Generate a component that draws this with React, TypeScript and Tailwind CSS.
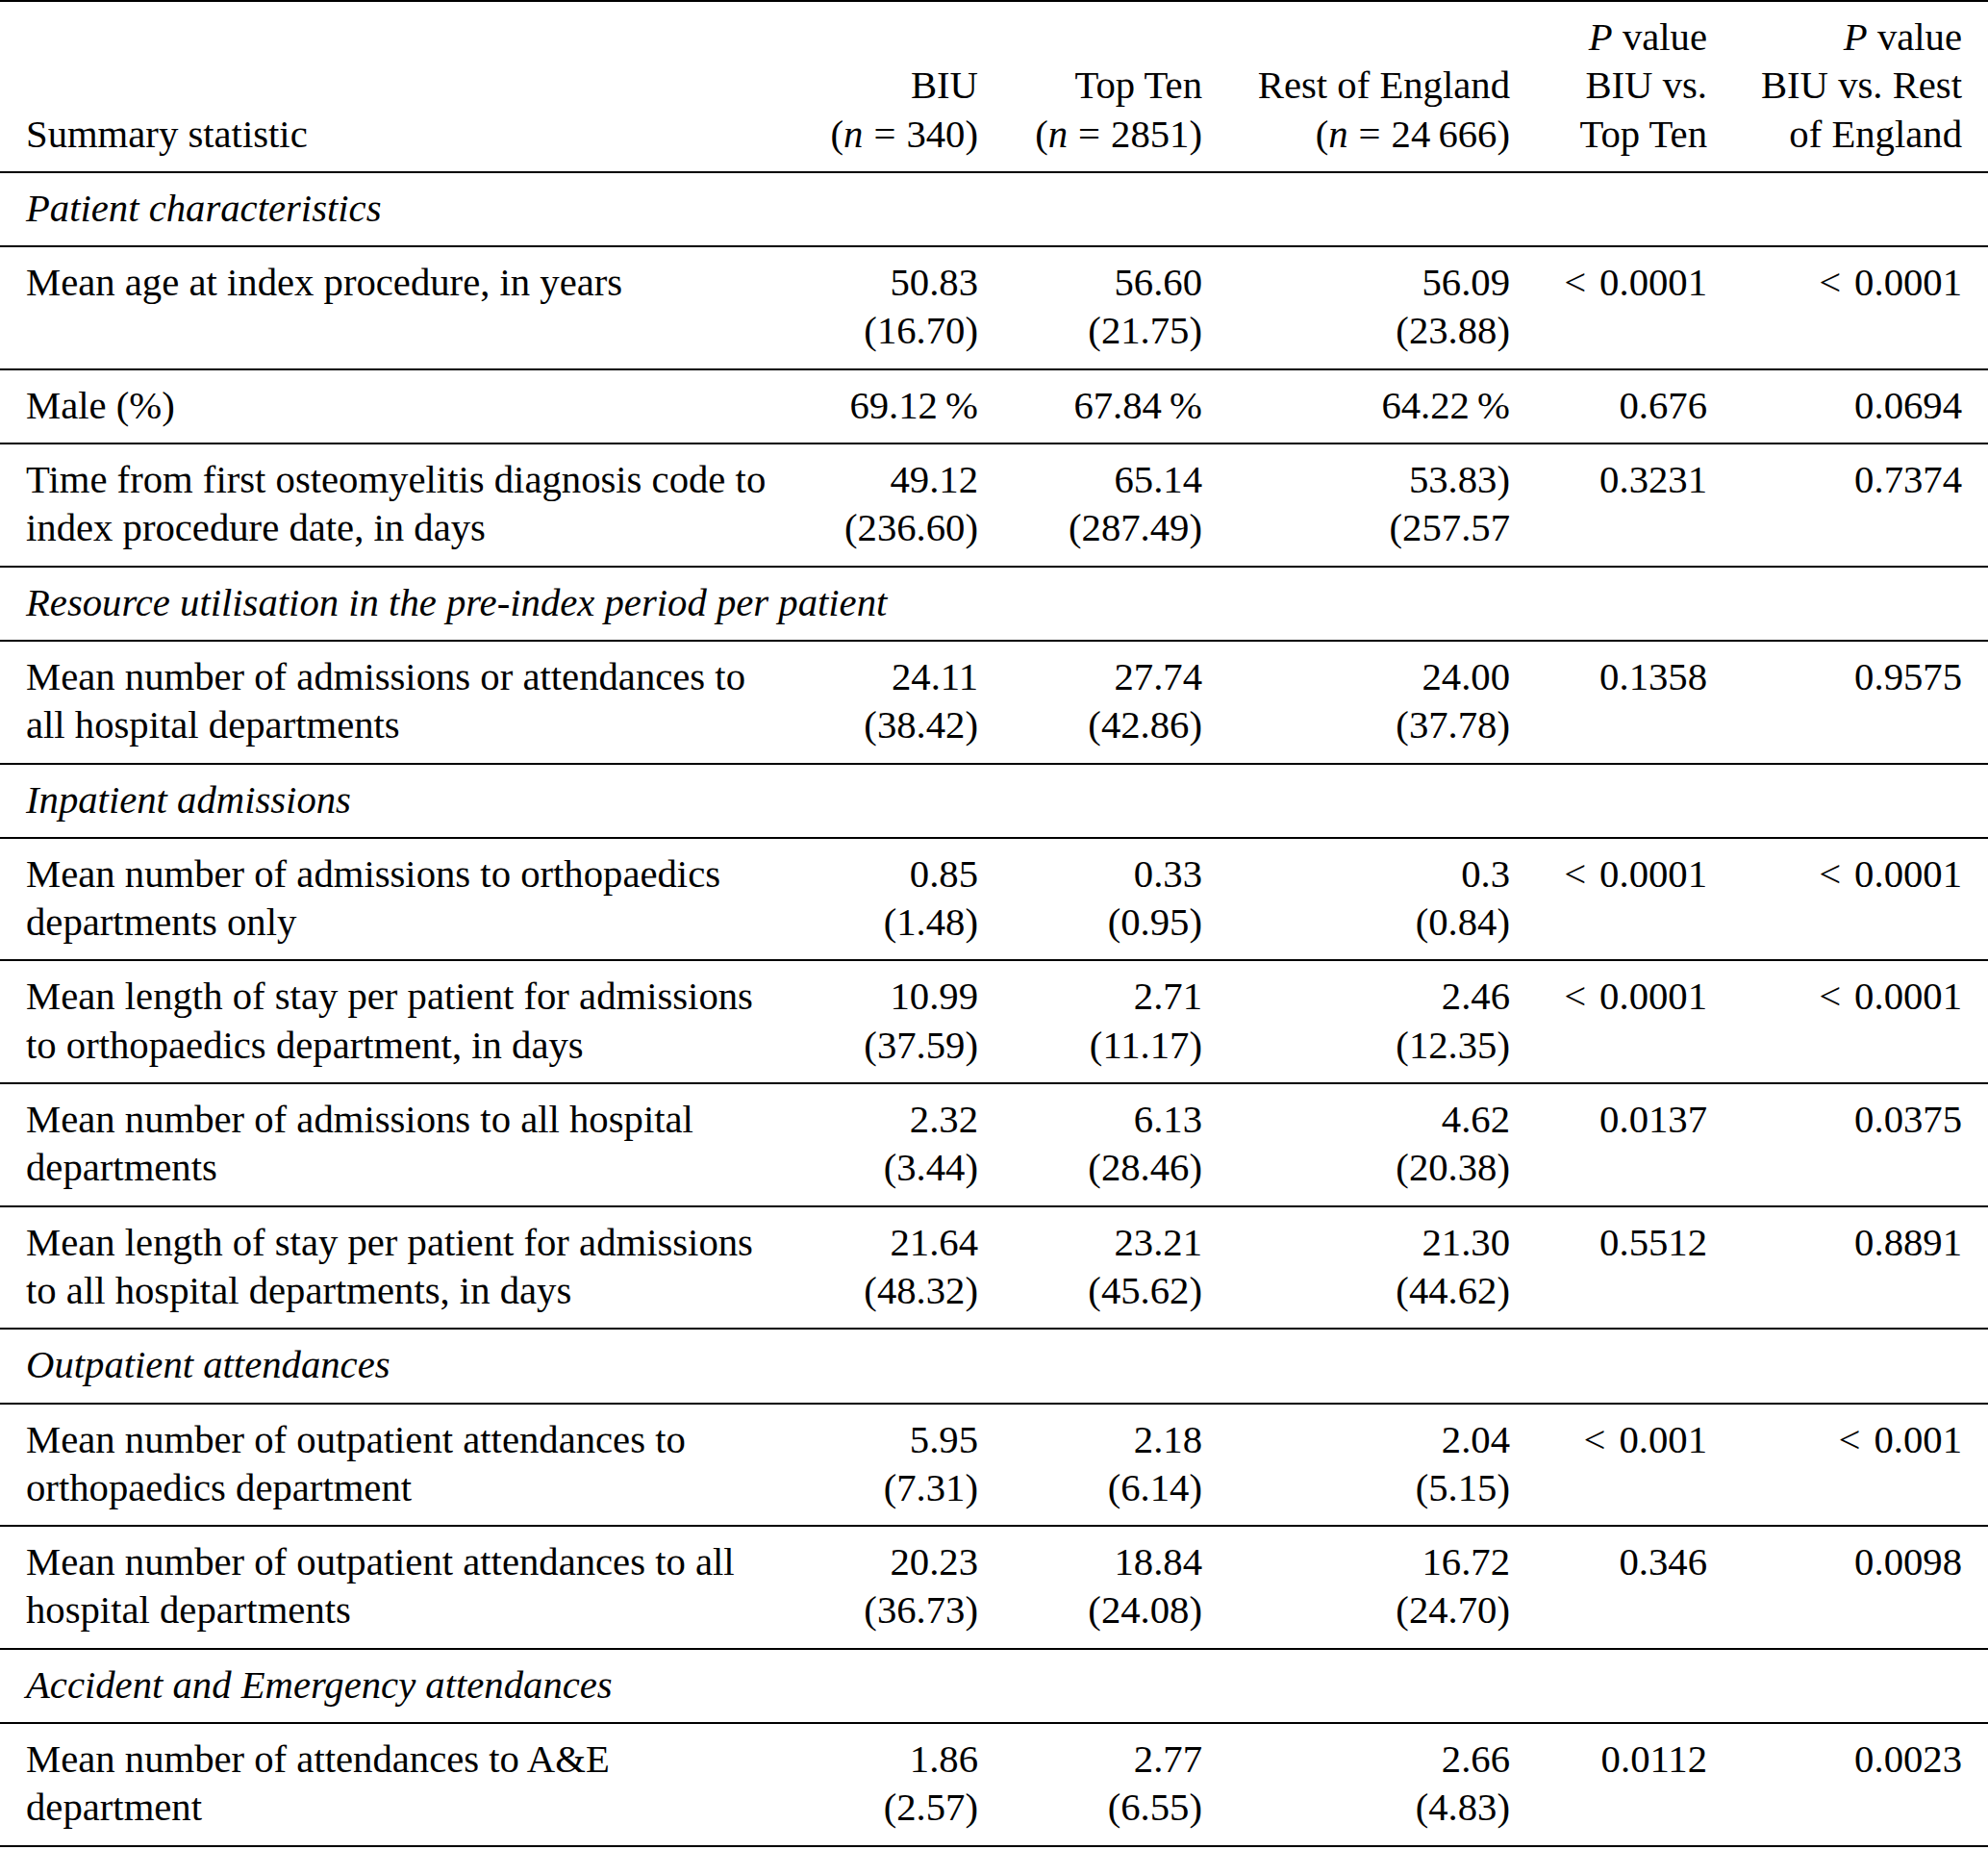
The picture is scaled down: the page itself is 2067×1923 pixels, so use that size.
import React from "react";

type Row =
  | { kind: "section"; label: string }
  | { kind: "data"; label: string[]; biu: string[]; top: string[]; rest: string[]; p1: string; p2: string };

const rows: Row[] = [
  { kind: "section", label: "Patient characteristics" },
  { kind: "data", label: ["Mean age at index procedure, in years"], biu: ["50.83", "(16.70)"], top: ["56.60", "(21.75)"], rest: ["56.09", "(23.88)"], p1: "< 0.0001", p2: "< 0.0001" },
  { kind: "data", label: ["Male (%)"], biu: ["69.12\u2009%"], top: ["67.84\u2009%"], rest: ["64.22\u2009%"], p1: "0.676", p2: "0.0694" },
  { kind: "data", label: ["Time from first osteomyelitis diagnosis code to", "index procedure date, in days"], biu: ["49.12", "(236.60)"], top: ["65.14", "(287.49)"], rest: ["53.83)", "(257.57"], p1: "0.3231", p2: "0.7374" },
  { kind: "section", label: "Resource utilisation in the pre-index period per patient" },
  { kind: "data", label: ["Mean number of admissions or attendances to", "all hospital departments"], biu: ["24.11", "(38.42)"], top: ["27.74", "(42.86)"], rest: ["24.00", "(37.78)"], p1: "0.1358", p2: "0.9575" },
  { kind: "section", label: "Inpatient admissions" },
  { kind: "data", label: ["Mean number of admissions to orthopaedics", "departments only"], biu: ["0.85", "(1.48)"], top: ["0.33", "(0.95)"], rest: ["0.3", "(0.84)"], p1: "< 0.0001", p2: "< 0.0001" },
  { kind: "data", label: ["Mean length of stay per patient for admissions", "to orthopaedics department, in days"], biu: ["10.99", "(37.59)"], top: ["2.71", "(11.17)"], rest: ["2.46", "(12.35)"], p1: "< 0.0001", p2: "< 0.0001" },
  { kind: "data", label: ["Mean number of admissions to all hospital", "departments"], biu: ["2.32", "(3.44)"], top: ["6.13", "(28.46)"], rest: ["4.62", "(20.38)"], p1: "0.0137", p2: "0.0375" },
  { kind: "data", label: ["Mean length of stay per patient for admissions", "to all hospital departments, in days"], biu: ["21.64", "(48.32)"], top: ["23.21", "(45.62)"], rest: ["21.30", "(44.62)"], p1: "0.5512", p2: "0.8891" },
  { kind: "section", label: "Outpatient attendances" },
  { kind: "data", label: ["Mean number of outpatient attendances to", "orthopaedics department"], biu: ["5.95", "(7.31)"], top: ["2.18", "(6.14)"], rest: ["2.04", "(5.15)"], p1: "< 0.001", p2: "< 0.001" },
  { kind: "data", label: ["Mean number of outpatient attendances to all", "hospital departments"], biu: ["20.23", "(36.73)"], top: ["18.84", "(24.08)"], rest: ["16.72", "(24.70)"], p1: "0.346", p2: "0.0098" },
  { kind: "section", label: "Accident and Emergency attendances" },
  { kind: "data", label: ["Mean number of attendances to A&E", "department"], biu: ["1.86", "(2.57)"], top: ["2.77", "(6.55)"], rest: ["2.66", "(4.83)"], p1: "0.0112", p2: "0.0023" },
];

function Lines({ lines }: { lines: string[] }) {
  return (
    <>
      {lines.map((l, i) => (
        <div key={i} className="whitespace-nowrap">
          {l}
        </div>
      ))}
    </>
  );
}

function PVal({ v }: { v: string }) {
  if (v.startsWith("< ")) {
    return (
      <span>
        <span className="mr-[14px]">&lt;</span>
        {v.slice(2)}
      </span>
    );
  }
  return <span>{v}</span>;
}

function N({ v }: { v: React.ReactNode }) {
  return (
    <div>
      (<i>n</i>
      <span className="mx-[11px]">=</span>
      {v})
    </div>
  );
}

const cell = "px-[27px] pt-[12px] pb-[13px] align-top";
const head = "px-[27px] pt-[12px] pb-[13px] align-bottom font-normal whitespace-nowrap";

export default function App() {
  return (
    <div
      className="w-[2067px] bg-white text-black text-[40.7px] leading-[50.3px]"
      style={{ fontFamily: '"Liberation Serif", "Times New Roman", serif' }}
    >
      <table className="w-full table-fixed border-collapse">
        <colgroup>
          <col className="w-[828px]" />
          <col className="w-[216px]" />
          <col className="w-[233px]" />
          <col className="w-[320px]" />
          <col className="w-[205px]" />
          <col className="w-[265px]" />
        </colgroup>
        <thead>
          <tr className="border-t-2 border-b-2 border-black">
            <th className={`${head} text-left`}>Summary statistic</th>
            <th className={`${head} text-right`}>
              <div>BIU</div>
              <N v="340" />
            </th>
            <th className={`${head} text-right`}>
              <div>Top Ten</div>
              <N v="2851" />
            </th>
            <th className={`${head} text-right`}>
              <div>Rest of England</div>
              <N v={"24\u2009666"} />
            </th>
            <th className={`${head} text-right`}>
              <div>
                <i>P</i> value
              </div>
              <div>BIU vs.</div>
              <div>Top Ten</div>
            </th>
            <th className={`${head} text-right`}>
              <div>
                <i>P</i> value
              </div>
              <div>BIU vs. Rest</div>
              <div>of England</div>
            </th>
          </tr>
        </thead>
        <tbody>
          {rows.map((r, i) =>
            r.kind === "section" ? (
              <tr key={i} className="border-b-2 border-black">
                <td colSpan={6} className={`${cell} italic whitespace-nowrap`}>
                  {r.label}
                </td>
              </tr>
            ) : (
              <tr key={i} className="border-b-2 border-black">
                <td className={`${cell} text-left`}>
                  <Lines lines={r.label} />
                </td>
                <td className={`${cell} text-right`}>
                  <Lines lines={r.biu} />
                </td>
                <td className={`${cell} text-right`}>
                  <Lines lines={r.top} />
                </td>
                <td className={`${cell} text-right`}>
                  <Lines lines={r.rest} />
                </td>
                <td className={`${cell} text-right whitespace-nowrap`}>
                  <PVal v={r.p1} />
                </td>
                <td className={`${cell} text-right whitespace-nowrap`}>
                  <PVal v={r.p2} />
                </td>
              </tr>
            )
          )}
        </tbody>
      </table>
    </div>
  );
}
